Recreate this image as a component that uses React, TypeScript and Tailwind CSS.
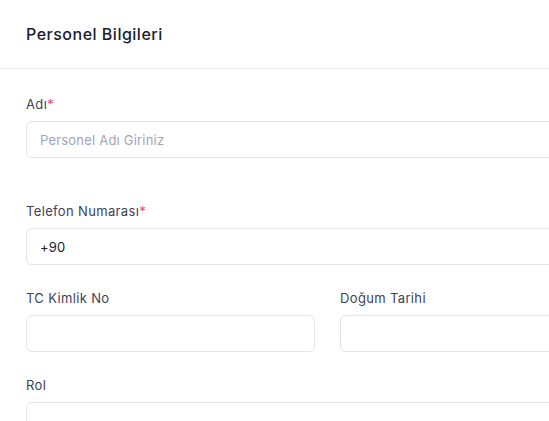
import React from "react";

function Label({ text, required }: { text: string; required?: boolean }) {
  return (
    <label className="mb-[7px] block h-5 text-[13px] leading-5 tracking-[0.35px] text-[#3f4254]">
      {text}
      {required && <span className="text-[#f1416c]">*</span>}
    </label>
  );
}

function Field({
  label,
  required,
  placeholder,
  value,
}: {
  label: string;
  required?: boolean;
  placeholder?: string;
  value?: string;
}) {
  return (
    <div>
      <Label text={label} required={required} />
      <input
        type="text"
        placeholder={placeholder}
        defaultValue={value}
        className="block h-[37px] w-full rounded-md border border-[#e2e3ec] bg-white px-[13px] text-[13px] tracking-[0.2px] text-[#181c32] outline-none placeholder:text-[#a1a5b7]"
      />
    </div>
  );
}

export default function App() {
  return (
    <div
      className="h-[421px] w-[549px] overflow-hidden bg-white"
      style={{ fontFamily: "Inter, 'Noto Sans', sans-serif" }}
    >
      <div className="w-[655px]">
        <div className="flex h-[69px] items-center border-b border-[#e9e9f1] px-[26px]">
          <h1 className="text-[16px] font-medium tracking-[0.5px] text-[#181c32]">
            Personel Bilgileri
          </h1>
        </div>
        <div className="flex flex-col gap-[23px] px-[26px] pt-[25px]">
          <div className="pb-5">
            <Field label="Adı" required placeholder="Personel Adı Giriniz" />
          </div>
          <Field label="Telefon Numarası" required value="+90" />
          <div className="grid grid-cols-2 gap-[25px]">
            <Field label="TC Kimlik No" />
            <Field label="Doğum Tarihi" />
          </div>
          <Field label="Rol" />
        </div>
      </div>
    </div>
  );
}
